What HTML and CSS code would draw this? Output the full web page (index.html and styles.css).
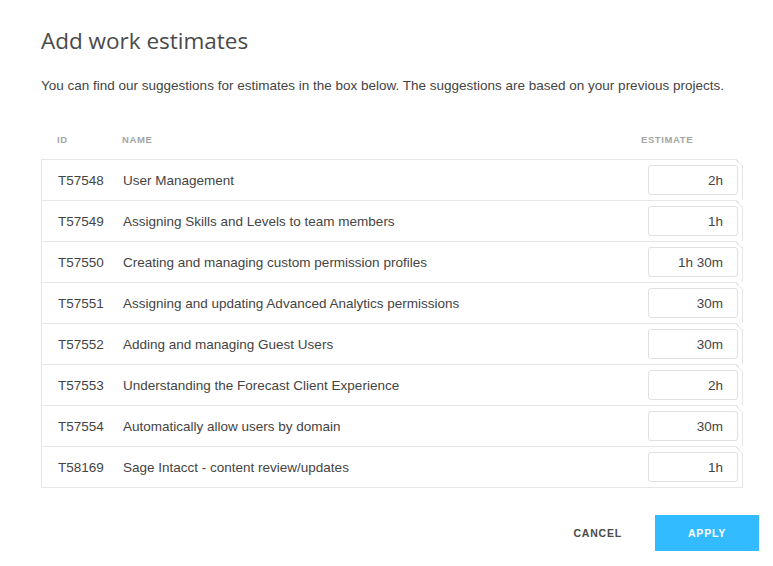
FILE: index.html
```html
<!DOCTYPE html>
<html lang="en">
<head>
  <meta charset="UTF-8" />
  <title>Add work estimates</title>
  <link rel="stylesheet" href="styles.css">
</head>
<body>

  <!-- === Dialog === -->
  <div class="dialog">
    <h1 class="title">Add work estimates</h1>
    <p class="intro">You can find our suggestions for estimates in the box below. The suggestions are based on your previous projects.</p>

    <div class="table">
      <div class="table-head">
        <span class="col-id">ID</span>
        <span class="col-name">NAME</span>
        <span class="col-estimate">ESTIMATE</span>
      </div>

      <div class="row">
        <span class="col-id">T57548</span>
        <span class="col-name">User Management</span>
        <input class="estimate" value="2h">
      </div>
      <div class="row">
        <span class="col-id">T57549</span>
        <span class="col-name">Assigning Skills and Levels to team members</span>
        <input class="estimate" value="1h">
      </div>
      <div class="row">
        <span class="col-id">T57550</span>
        <span class="col-name">Creating and managing custom permission profiles</span>
        <input class="estimate" value="1h 30m">
      </div>
      <div class="row">
        <span class="col-id">T57551</span>
        <span class="col-name">Assigning and updating Advanced Analytics permissions</span>
        <input class="estimate" value="30m">
      </div>
      <div class="row">
        <span class="col-id">T57552</span>
        <span class="col-name">Adding and managing Guest Users</span>
        <input class="estimate" value="30m">
      </div>
      <div class="row">
        <span class="col-id">T57553</span>
        <span class="col-name">Understanding the Forecast Client Experience</span>
        <input class="estimate" value="2h">
      </div>
      <div class="row">
        <span class="col-id">T57554</span>
        <span class="col-name">Automatically allow users by domain</span>
        <input class="estimate" value="30m">
      </div>
      <div class="row">
        <span class="col-id">T58169</span>
        <span class="col-name">Sage Intacct - content review/updates</span>
        <input class="estimate" value="1h">
      </div>
    </div>

    <div class="footer">
      <button class="btn btn-cancel">Cancel</button>
      <button class="btn btn-apply">Apply</button>
    </div>
  </div>

</body>
</html>
```

FILE: styles.css
```css
body {
  margin: 0;
  background: #fff;
  color: #444;
  font-family: "Liberation Sans", Arial, sans-serif;
}

.dialog {
  padding: 29px 14px 0 41px;
}

.title {
  margin: 0;
  font-family: "Open Sans", sans-serif;
  font-weight: 400;
  font-size: 22.5px;
  line-height: 24px;
  color: #4a4a4a;
}

.intro {
  margin: 25px 0 0;
  font-size: 13.5px;
  line-height: 16px;
  color: #444;
}

/* === Table === */
.table {
  width: 702px;
  margin-top: 35px;
}

.table-head {
  display: flex;
  align-items: center;
  height: 20px;
  margin-bottom: 10px;
  font-size: 9.5px;
  font-weight: bold;
  letter-spacing: 0.6px;
  color: #a5a5a5;
}

.col-id {
  width: 81px;
  padding-left: 16px;
  box-sizing: border-box;
}

.col-name {
  flex: 1;
}

.col-estimate {
  width: 102px;
}

.row {
  position: relative;
  display: flex;
  align-items: center;
  height: 40px;
  border: 1px solid #e6e6e6;
  border-top: none;
  font-size: 13.5px;
  color: #444;
}

.table-head + .row {
  border-top: 1px solid #e6e6e6;
}

.row .col-id {
  padding-left: 16px;
  width: 81px;
}

/* folded top-right corner */
.row::after {
  content: "";
  position: absolute;
  top: -1px;
  right: -1px;
  width: 7px;
  height: 7px;
  background: linear-gradient(to bottom left, #fff 50%, #e6e6e6 50%, #e6e6e6 calc(50% + 1px), transparent calc(50% + 1px));
}

.estimate {
  width: 90px;
  height: 30px;
  box-sizing: border-box;
  margin-right: 4px;
  padding: 0 14px 0 8px;
  border: 1px solid #e0e0e0;
  border-radius: 3px;
  font: inherit;
  font-size: 13.5px;
  color: #444;
  text-align: right;
  outline: none;
}

/* === Footer === */
.footer {
  display: flex;
  justify-content: flex-end;
  align-items: center;
  margin-top: 27px;
}

.btn {
  border: none;
  background: none;
  font-family: "Liberation Sans", Arial, sans-serif;
  font-size: 10.5px;
  font-weight: bold;
  letter-spacing: 0.8px;
  text-transform: uppercase;
  cursor: pointer;
}

.btn-cancel {
  color: #4a4a4a;
  padding: 0 33px 0 0;
}

.btn-apply {
  width: 104px;
  height: 36px;
  background: #33bbff;
  color: #fff;
}
```
